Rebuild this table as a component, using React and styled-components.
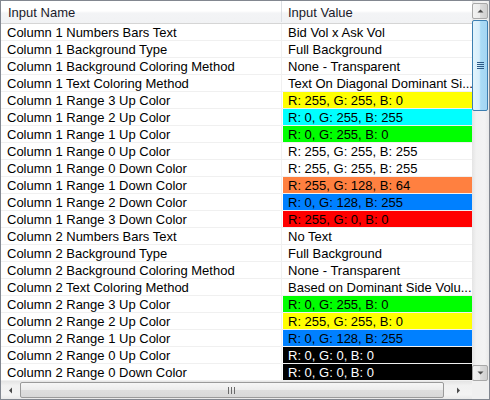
import React from 'react';
import styled, { createGlobalStyle } from 'styled-components';

const Global = createGlobalStyle`
  html, body { margin: 0; padding: 0; background: #fff; }
  body { font-family: "Liberation Sans", Arial, sans-serif; }
`;

const Frame = styled.div`
  width: 490px;
  height: 400px;
  box-sizing: border-box;
  border: 1px solid #828790;
  display: grid;
  grid-template-columns: 1fr 17px;
  grid-template-rows: 380px 18px;
  background: #fff;
  overflow: hidden;
`;

const Table = styled.div`
  display: flex;
  flex-direction: column;
  overflow: hidden;
  font-size: 13px;
  color: #000;
`;

const HeaderRow = styled.div`
  display: grid;
  grid-template-columns: 281px 1fr;
  height: 23px;
  box-sizing: border-box;
  border-bottom: 1px solid #d5d5d5;
  background: linear-gradient(#ffffff 0%, #ffffff 45%, #f3f4f6 55%, #f1f2f4 100%);
  flex-shrink: 0;
`;

const HeaderCell = styled.div`
  display: flex;
  align-items: center;
  padding-left: ${p => (p.$first ? '7px' : '6px')};
  padding-top: 1px;
  border-right: ${p => (p.$first ? '1px solid #dcdfe3' : 'none')};
  margin-bottom: 1px;
  color: #1a1a2a;
  white-space: nowrap;
`;

const Row = styled.div`
  display: grid;
  grid-template-columns: 281px 1fr;
  height: 17px;
  box-sizing: border-box;
  border-bottom: 1px solid #f0f0f0;
  flex-shrink: 0;
`;

const NameCell = styled.div`
  padding-left: 6px;
  line-height: 18px;
  border-right: 1px solid #f0f0f0;
  white-space: nowrap;
  overflow: hidden;
`;

const ValueCell = styled.div`
  padding-left: 5px;
  margin-left: 1px;
  line-height: 18px;
  white-space: nowrap;
  overflow: hidden;
  background: ${p => p.$bg || 'transparent'};
  color: ${p => p.$fg || '#000'};
`;

const VScroll = styled.div`
  display: flex;
  flex-direction: column;
  align-items: stretch;
  background: linear-gradient(90deg, #e4e4e4 0%, #f1f1f1 25%, #f3f3f3 75%, #e9e9e9 100%);
`;

const ArrowButton = styled.div`
  height: 16px;
  margin: ${p => (p.$bottom ? '0 1px 0 0' : '2px 1px 0 0')};
  box-sizing: border-box;
  border: 1px solid #a8a8a8;
  border-radius: 2px;
  background: linear-gradient(90deg, #f2f2f2 0%, #ebebeb 50%, #dddddd 51%, #cfcfcf 100%);
  display: flex;
  align-items: center;
  justify-content: center;
`;

const VThumb = styled.div`
  height: 91px;
  margin: 1px 1px 0 0;
  box-sizing: border-box;
  border: 1px solid #3c7fb1;
  border-radius: 2px;
  background: linear-gradient(90deg, #e3f4fc 0%, #d6eefc 45%, #a9dbf6 55%, #a4d5f2 100%);
  display: flex;
  align-items: center;
  justify-content: center;
`;

const Spacer = styled.div`
  flex: 1;
`;

const HScroll = styled.div`
  display: flex;
  align-items: stretch;
  background: linear-gradient(#e4e4e4 0%, #f1f1f1 25%, #f3f3f3 75%, #e9e9e9 100%);
`;

const ArrowSlot = styled.div`
  width: ${p => p.$w}px;
  display: flex;
  align-items: center;
  justify-content: center;
  flex-shrink: 0;
`;

const HThumb = styled.div`
  width: 424px;
  margin: 1px 0 1px 0;
  box-sizing: border-box;
  border: 1px solid #9a9a9a;
  border-radius: 2px;
  background: linear-gradient(#f6f6f6 0%, #ececec 50%, #dedede 51%, #d8d8d8 100%);
  display: flex;
  align-items: center;
  justify-content: center;
`;

const Corner = styled.div`
  background: #f0f0f0;
`;

const rows = [
  ['Column 1 Numbers Bars Text', 'Bid Vol x Ask Vol'],
  ['Column 1 Background Type', 'Full Background'],
  ['Column 1 Background Coloring Method', 'None - Transparent'],
  ['Column 1 Text Coloring Method', 'Text On Diagonal Dominant Si...'],
  ['Column 1 Range 3 Up Color', 'R: 255, G: 255, B: 0', '#ffff00'],
  ['Column 1 Range 2 Up Color', 'R: 0, G: 255, B: 255', '#00ffff'],
  ['Column 1 Range 1 Up Color', 'R: 0, G: 255, B: 0', '#00ff00'],
  ['Column 1 Range 0 Up Color', 'R: 255, G: 255, B: 255'],
  ['Column 1 Range 0 Down Color', 'R: 255, G: 255, B: 255'],
  ['Column 1 Range 1 Down Color', 'R: 255, G: 128, B: 64', '#ff8040'],
  ['Column 1 Range 2 Down Color', 'R: 0, G: 128, B: 255', '#0080ff'],
  ['Column 1 Range 3 Down Color', 'R: 255, G: 0, B: 0', '#ff0000'],
  ['Column 2 Numbers Bars Text', 'No Text'],
  ['Column 2 Background Type', 'Full Background'],
  ['Column 2 Background Coloring Method', 'None - Transparent'],
  ['Column 2 Text Coloring Method', 'Based on Dominant Side Volu...'],
  ['Column 2 Range 3 Up Color', 'R: 0, G: 255, B: 0', '#00ff00'],
  ['Column 2 Range 2 Up Color', 'R: 255, G: 255, B: 0', '#ffff00'],
  ['Column 2 Range 1 Up Color', 'R: 0, G: 128, B: 255', '#0080ff'],
  ['Column 2 Range 0 Up Color', 'R: 0, G: 0, B: 0', '#000000', '#ffffff'],
  ['Column 2 Range 0 Down Color', 'R: 0, G: 0, B: 0', '#000000', '#ffffff'],
];

const Tri = ({ dir, color = '#4a4a4a' }) => {
  const pts = {
    up: '0.5,4.5 3.5,1.5 6.5,4.5',
    down: '0.5,1.5 3.5,4.5 6.5,1.5',
    left: '4,0.5 1,3.5 4,6.5',
    right: '1,0.5 4,3.5 1,6.5',
  }[dir];
  const horiz = dir === 'left' || dir === 'right';
  return (
    <svg width={horiz ? 5 : 7} height={horiz ? 7 : 6} viewBox={horiz ? '0 0 5 7' : '0 0 7 6'}>
      <polygon points={pts} fill={color} />
    </svg>
  );
};

const VGrip = () => (
  <svg width="7" height="7" viewBox="0 0 7 7">
    {[0.5, 2.5, 4.5, 6.5].map(y => (
      <line key={y} x1="0" x2="7" y1={y} y2={y} stroke={y % 2 === 0.5 ? '#2d5a86' : '#eaf6fd'} strokeWidth="1" />
    ))}
  </svg>
);

const HGrip = () => (
  <svg width="8" height="7" viewBox="0 0 8 7">
    {[0.5, 3.5, 6.5].map(x => (
      <line key={x} y1="0" y2="7" x1={x} x2={x} stroke="#6a6a6a" strokeWidth="1" />
    ))}
  </svg>
);

export default function App() {
  return (
    <>
      <Global />
      <Frame>
        <Table>
          <HeaderRow>
            <HeaderCell $first>Input Name</HeaderCell>
            <HeaderCell>Input Value</HeaderCell>
          </HeaderRow>
          {rows.map(([name, value, bg, fg], i) => (
            <Row key={i}>
              <NameCell>{name}</NameCell>
              <ValueCell $bg={bg} $fg={fg}>{value}</ValueCell>
            </Row>
          ))}
        </Table>
        <VScroll>
          <ArrowButton>
            <Tri dir="up" />
          </ArrowButton>
          <VThumb>
            <VGrip />
          </VThumb>
          <Spacer />
          <ArrowButton $bottom>
            <Tri dir="down" />
          </ArrowButton>
        </VScroll>
        <HScroll>
          <ArrowSlot $w={19}>
            <Tri dir="left" />
          </ArrowSlot>
          <HThumb>
            <HGrip />
          </HThumb>
          <Spacer />
          <ArrowSlot $w={28}>
            <Tri dir="right" />
          </ArrowSlot>
        </HScroll>
        <Corner />
      </Frame>
    </>
  );
}
